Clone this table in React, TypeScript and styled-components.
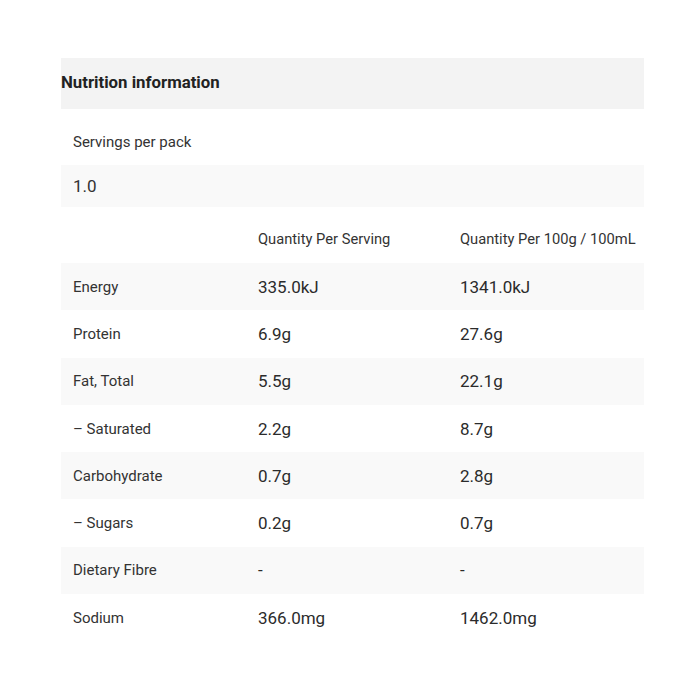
import styled, { createGlobalStyle } from 'styled-components';

const GlobalStyle = createGlobalStyle`
  html, body {
    margin: 0;
    padding: 0;
    background: #ffffff;
  }
  body {
    font-family: Roboto, 'Liberation Sans', Arial, sans-serif;
    color: #333333;
  }
`;

const Page = styled.div`
  padding: 58px 56px 0 61px;
`;

const Panel = styled.section`
  width: 583px;
`;

const Title = styled.h2`
  margin: 0 0 9px;
  height: 51px;
  padding-bottom: 3px;
  box-sizing: border-box;
  display: flex;
  align-items: center;
  background: #f3f3f3;
  font-size: 16.8px;
  font-weight: 700;
  color: #222222;
`;

const Servings = styled.div<{ $shaded?: boolean }>`
  display: flex;
  align-items: center;
  height: ${({ $shaded }) => ($shaded ? '42px' : '47px')};
  padding: 0 12px;
  background: ${({ $shaded }) => ($shaded ? '#f9f9f9' : 'transparent')};
  font-size: ${({ $shaded }) => ($shaded ? '17px' : '15px')};
  color: #333333;
`;

const Grid = styled.div`
  display: grid;
  grid-template-columns: 185px 202px 196px;
`;

const HeadCell = styled.div`
  height: 56px;
  padding: 23px 12px 0;
  box-sizing: border-box;
  font-size: 14.7px;
  white-space: nowrap;
  color: #333333;
`;

const Row = styled.div<{ $shaded: boolean }>`
  display: contents;
  & > div {
    background: ${({ $shaded }) => ($shaded ? '#f9f9f9' : '#ffffff')};
  }
`;

const Cell = styled.div<{ $value?: boolean }>`
  height: 47.3px;
  display: flex;
  align-items: center;
  padding: 0 12px;
  font-size: ${({ $value }) => ($value ? '17px' : '15px')};
  color: ${({ $value }) => ($value ? '#2b2b2b' : '#333333')};
`;

const rows: [string, string, string][] = [
  ['Energy', '335.0kJ', '1341.0kJ'],
  ['Protein', '6.9g', '27.6g'],
  ['Fat, Total', '5.5g', '22.1g'],
  ['\u2013 Saturated', '2.2g', '8.7g'],
  ['Carbohydrate', '0.7g', '2.8g'],
  ['\u2013 Sugars', '0.2g', '0.7g'],
  ['Dietary Fibre', '-', '-'],
  ['Sodium', '366.0mg', '1462.0mg'],
];

const App = () => {
  return (
    <Page>
      <GlobalStyle />
      <Panel>
        <Title>Nutrition information</Title>
        <Servings>Servings per pack</Servings>
        <Servings $shaded>1.0</Servings>
        <Grid>
          <HeadCell />
          <HeadCell>Quantity Per Serving</HeadCell>
          <HeadCell>Quantity Per 100g / 100mL</HeadCell>
          {rows.map(([name, serving, per100], i) => (
            <Row key={name} $shaded={i % 2 === 0}>
              <Cell>{name}</Cell>
              <Cell $value>{serving}</Cell>
              <Cell $value>{per100}</Cell>
            </Row>
          ))}
        </Grid>
      </Panel>
    </Page>
  );
};

export default App;
